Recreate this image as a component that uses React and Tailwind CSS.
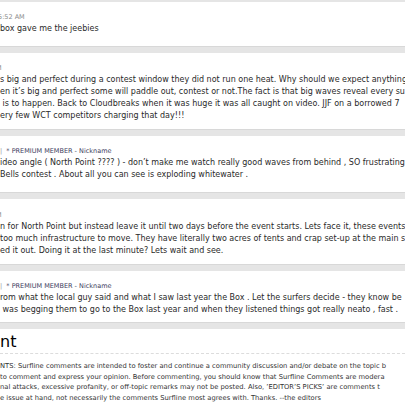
const comments = [
  {
    pad: 'pt-[10px] pb-[11px]',
    meta: <span className="text-[#8a8a8a] -ml-[2px]">5:52 AM</span>,
    lines: ['box gave me the jeebies'],
  },
  {
    pad: 'pt-[10px] pb-[7px]',
    meta: <span className="text-[#8a8a8a] -ml-[4px]">M</span>,
    lines: [
      's big and perfect during a contest window they did not run one heat. Why should we expect anything',
      'en it\u2019s big and perfect some will paddle out, contest or not.The fact is that big waves reveal every sur',
      '\u00a0is to happen. Back to Cloudbreaks when it was huge it was all caught on video. JJF on a borrowed 7',
      'ery few WCT competitors charging that day!!!',
    ],
  },
  {
    pad: 'pt-[10px] pb-[11px]',
    meta: (
      <span className="text-[#3b3b5c]">
        <span className="text-[#999]">|</span>&nbsp; * PREMIUM MEMBER - <span className="normal-case">Nickname</span>
      </span>
    ),
    lines: [
      'ideo angle ( North Point ???? ) - don\u2019t make me watch really good waves from behind , SO frustrating',
      'Bells contest . About all you can see is exploding whitewater .',
    ],
  },
  {
    pad: 'pt-[11px] pb-[7px]',
    meta: <span className="text-[#8a8a8a] -ml-[4px]">M</span>,
    lines: [
      'n for North Point but instead leave it until two days before the event starts. Lets face it, these events',
      'too much infrastructure to move. They have literally two acres of tents and crap set-up at the main s',
      'ed it out. Doing it at the last minute? Lets wait and see.',
    ],
  },
  {
    pad: 'pt-[10px] pb-[6px]',
    meta: (
      <span className="text-[#3b3b5c]">
        <span className="text-[#999]">|</span>&nbsp; * PREMIUM MEMBER - <span className="normal-case">Nickname</span>
      </span>
    ),
    lines: [
      'rom what the local guy said and what I saw last year the Box . Let the surfers decide - they know be',
      '\u00a0was begging them to go to the Box last year and when they listened things got really neato , fast .',
    ],
  },
]

const disclaimer = [
  'NTS: Surfline comments are intended to foster and continue a community discussion and/or debate on the topic b',
  'to comment and express your opinion. Before commenting, you should know that Surfline Comments are modera',
  'nal attacks, excessive profanity, or off-topic remarks may not be posted. Also, \u2019EDITOR\u2019S PICKS\u2019 are comments t',
  'e issue at hand, not necessarily the comments Surfline most agrees with. Thanks. --the editors',
]

function Bar() {
  return <div className="h-[7px] bg-[#e5e5e5] border-t border-[#d8d8d8]" />
}

export default function App() {
  return (
    <div
      className="w-[405px] h-[405px] overflow-hidden bg-white text-[#2a2a2a]"
      style={{ fontFamily: '"DejaVu Sans", Verdana, sans-serif' }}
    >
      <div className="-mt-[5px]">
        {comments.map((c, i) => (
          <div key={i}>
            <Bar />
            <div className={c.pad}>
              <div className="h-[11px] leading-[11px] text-[6.5px] uppercase whitespace-nowrap">
                {c.meta}
              </div>
              {c.lines.map((l, j) => (
                <div key={j} className="h-[12px] leading-[12px] text-[8px] whitespace-nowrap">
                  {l}
                </div>
              ))}
            </div>
          </div>
        ))}
        <Bar />

        <div className="pt-[4px]">
          <div className="text-[16px] leading-[18px] text-black">nt</div>
          <div className="mt-[2px] border-t border-dashed border-[#dcdcdc]" />
          <div className="pt-[7px]">
            {disclaimer.map((l, j) => (
              <div key={j} className="h-[10.7px] leading-[10.7px] text-[6.75px] text-[#333] whitespace-nowrap">
                {l}
              </div>
            ))}
          </div>
        </div>
      </div>
    </div>
  )
}
